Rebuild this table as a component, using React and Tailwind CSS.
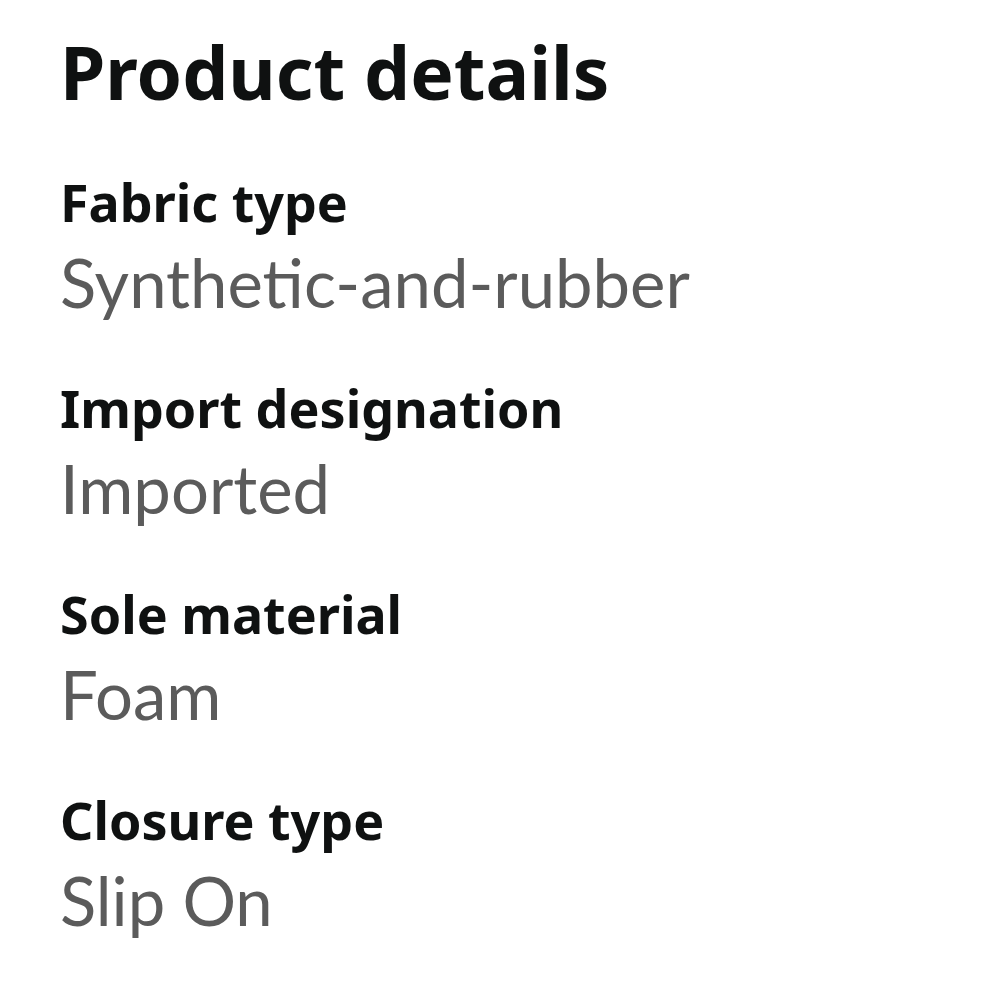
import React from 'react';

const details = [
  { label: 'Fabric type', value: 'Synthetic-and-rubber' },
  { label: 'Import designation', value: 'Imported' },
  { label: 'Sole material', value: 'Foam' },
  { label: 'Closure type', value: 'Slip On' },
];

export default function App() {
  return (
    <div className="min-h-screen bg-white pl-[60px] pt-[35px]">
      {/* Heading */}
      <h1 className="font-['Noto_Sans',sans-serif] text-[73px] leading-[73px] font-bold text-[#0f1111]">
        Product details
      </h1>

      {/* Detail rows */}
      <div className="mt-[68px] flex flex-col gap-[66px]">
        {details.map((d) => (
          <div key={d.label} className="flex flex-col gap-[21px]">
            <div className="font-['Noto_Sans',sans-serif] text-[52px] leading-[52px] font-bold text-[#0f1111]">
              {d.label}
            </div>
            <div className="font-['Lato',sans-serif] text-[67px] leading-[67px] text-[#5b5b5b]">
              {d.value}
            </div>
          </div>
        ))}
      </div>
    </div>
  );
}
